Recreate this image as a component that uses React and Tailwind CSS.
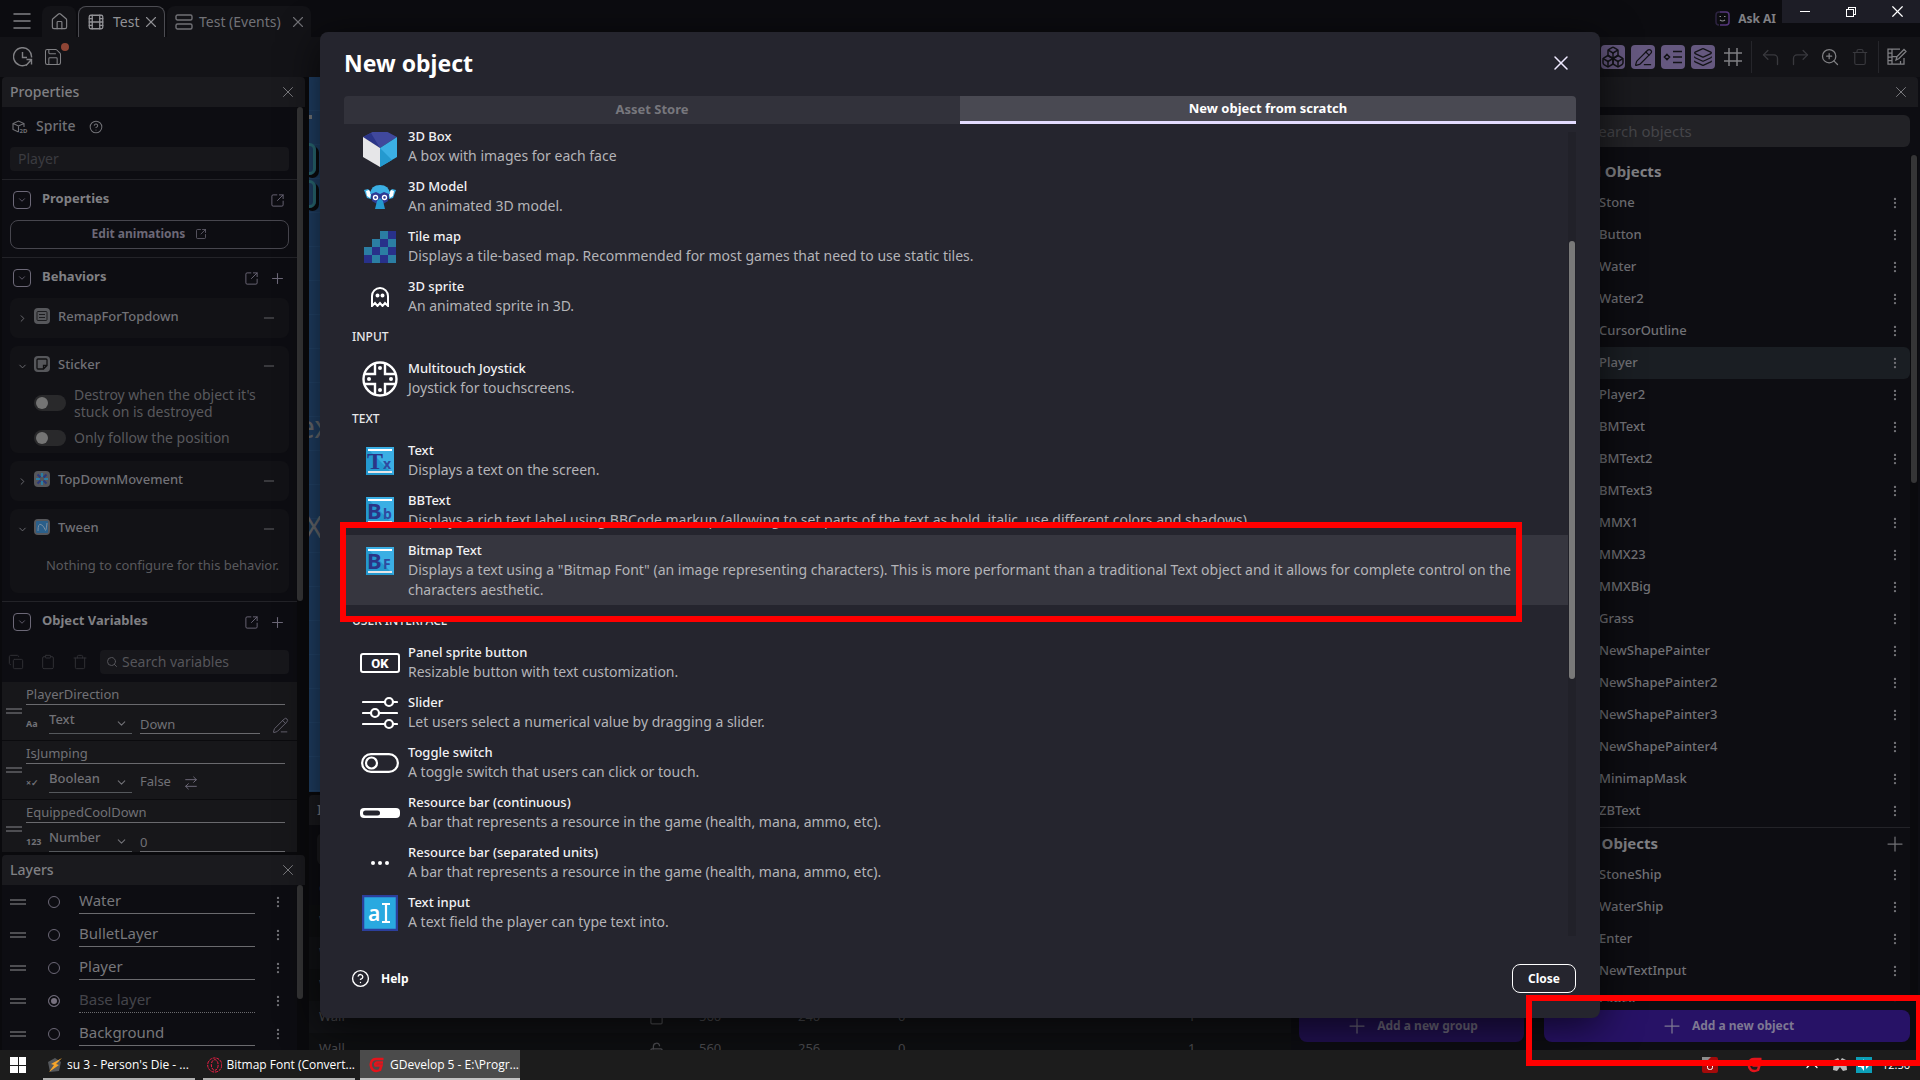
import {
  Menu, House, Film, X, Save, CircleHelp, ChevronDown, ChevronRight, SquareArrowOutUpRight, Plus, Minus,
  Copy, Clipboard, Trash, Search, PencilLine, ArrowRightLeft, EllipsisVertical, Boxes, Layers, CornerUpLeft,
  CornerUpRight, ZoomIn, Lock, LockOpen, ChevronUp,
} from 'lucide-react';

const localObjects = [
  'Stone', 'Button', 'Water', 'Water2', 'CursorOutline', 'Player', 'Player2', 'BMText', 'BMText2', 'BMText3', 'MMX1',
  'MMX23', 'MMXBig', 'Grass', 'NewShapePainter', 'NewShapePainter2', 'NewShapePainter3', 'NewShapePainter4',
  'MinimapMask', 'ZBText',
];
const globalObjects = ['StoneShip', 'WaterShip', 'Enter', 'NewTextInput', 'Lance'];
const layers = ['Water', 'BulletLayer', 'Player', 'Base layer', 'Background'];

/* ---------- Object type icons ---------- */

const BoxIcon = () => (
  <svg width="36" height="40" viewBox="0 0 36 40">
    <path d="M18 1 35 10 18 21 1 10Z" fill="#40489c" />
    <path d="M1 10 9 6 18 21Z" fill="#2b3587" />
    <path d="M1 10 18 21V40L1 30Z" fill="#e6e6e8" />
    <path d="M35 10 18 21V40L35 30Z" fill="#3bafe4" />
    <path d="M18 21 30 33 18 40Z" fill="#2499cf" />
  </svg>
);

const MonkeyIcon = () => (
  <svg width="32" height="26" viewBox="0 0 32 26">
    <path d="M0 6 4 5 8 9 7 15 3 14Z M32 6 28 5 24 9 25 15 29 14Z" fill="#3bafe4" />
    <path d="M2 7 5 6 7 10 6 14 3 12Z M30 7 27 6 25 10 26 14 29 12Z" fill="#fff" />
    <path d="M6 10Q7 1 16 1T26 10L20 12H12Z" fill="#3bafe4" />
    <path d="M7 10 12 8 16 10 20 8 25 10 24 17 19 20H13L8 17Z" fill="#2c3a94" />
    <path d="M13 17 16 14 19 17 21 25H11Z" fill="#2499cf" />
    <circle cx="11.5" cy="13.5" r="2" fill="#2c3a94" stroke="#fff" strokeWidth="1.4" />
    <circle cx="20.5" cy="13.5" r="2" fill="#2c3a94" stroke="#fff" strokeWidth="1.4" />
  </svg>
);

const TileMapIcon = () => (
  <svg width="32" height="32" viewBox="0 0 32 32" shapeRendering="crispEdges">
    <path d="M16 0h8v8h-8z M8 8h8v8H8z M24 8h8v8h-8z M0 16h8v8H0z M16 16h8v8h-8z M8 24h8v8H8z M24 24h8v8h-8z" fill="#2b7ea3" />
    <path d="M24 0h8v8h-8z M16 8h8v8h-8z M8 16h8v8H8z M24 16h8v8h-8z M0 24h8v8H0z M16 24h8v8h-8z" fill="#28318a" />
  </svg>
);

const GhostIcon = () => (
  <svg width="18" height="20" viewBox="0 0 18 20" fill="none" stroke="#fff" strokeWidth="2">
    <path d="M1 19V9a8 8 0 0 1 16 0v10l-3-3-2.500 3L9 16l-2.500 3L4 16Z" />
    <circle cx="6.500" cy="8.500" r="1" />
    <circle cx="11.500" cy="8.500" r="1" />
  </svg>
);

const JoystickIcon = () => (
  <svg width="36" height="36" viewBox="0 0 36 36" fill="none" stroke="#fff" strokeWidth="2.400">
    <circle cx="18" cy="18" r="16.500" />
    <path d="M13 3V13H3 M23 3V13H33 M13 33V23H3 M23 33V23H33" />
    <g fill="#fff" stroke="none">
      <circle cx="18" cy="7" r="2" /><circle cx="18" cy="29" r="2" />
      <circle cx="7" cy="18" r="2" /><circle cx="29" cy="18" r="2" />
    </g>
  </svg>
);

const LetterIcon = ({ big, small, serif }) => (
  <svg width="28" height="28" viewBox="0 0 28 28">
    <rect width="28" height="28" fill="#3bafe4" />
    <path d="M0 0 28 28H0Z" fill="#2499cf" />
    <path d="M2 3H26" stroke="#fff" strokeWidth="2" />
    <path d="M2 25H26" stroke="#e6e6e8" strokeWidth="2" />
    <text x="1" y="22" fontSize={serif ? 24 : 22} fontWeight="700" fill="#2b3587" fontFamily={serif ? 'Liberation Serif' : 'Noto Sans'}>{big}</text>
    <text x="17" y="22" fontSize="14" fontWeight="700" fill="#2f4ba0" fontFamily="Noto Sans">{small}</text>
  </svg>
);

const OkIcon = () => (
  <svg width="40" height="20" viewBox="0 0 40 20">
    <rect x="1" y="1" width="38" height="18" rx="2" fill="none" stroke="#fff" strokeWidth="2" />
    <text x="20" y="15" textAnchor="middle" fontSize="13" fontWeight="800" fill="#fff" fontFamily="Roboto">OK</text>
  </svg>
);

const SliderIcon = () => (
  <svg width="36" height="34" viewBox="0 0 36 34" stroke="#fff" strokeWidth="2.200" strokeLinecap="round">
    <path d="M1 6H35 M1 17H35 M1 28H35" />
    <g fill="#25252e">
      <circle cx="27" cy="6" r="4" /><circle cx="13" cy="17" r="4" /><circle cx="27" cy="28" r="4" />
    </g>
  </svg>
);

const ToggleIcon = () => (
  <svg width="38" height="20" viewBox="0 0 38 20" fill="none" stroke="#fff" strokeWidth="2.200">
    <rect x="1.100" y="1.100" width="35.800" height="17.800" rx="8.900" />
    <circle cx="10.500" cy="10" r="5.500" />
  </svg>
);

const BarIcon = () => (
  <svg width="40" height="10" viewBox="0 0 40 10">
    <rect width="40" height="10" rx="4" fill="#fff" />
    <rect x="3" y="2.500" width="17" height="5" rx="2.500" fill="#25252e" />
  </svg>
);

const DotsIcon = () => (
  <svg width="18" height="4" viewBox="0 0 18 4" fill="#fff">
    <circle cx="2" cy="2" r="2" /><circle cx="9" cy="2" r="2" /><circle cx="16" cy="2" r="2" />
  </svg>
);

const TextInputIcon = () => (
  <svg width="36" height="36" viewBox="0 0 36 36">
    <rect x="1" y="1" width="34" height="34" fill="#29a9e0" stroke="#2c3f9c" strokeWidth="2.500" />
    <text x="6" y="26" fontSize="21" fontWeight="600" fill="#fff" fontFamily="Noto Sans">a</text>
    <path d="M20 9H28 M24 9V27 M20 27H28" stroke="#fff" strokeWidth="2.200" />
  </svg>
);

/* ---------- Toolbar and behavior icons ---------- */

const HistoryIcon = () => (
  <svg width="20" height="20" viewBox="0 0 20 20" fill="none" stroke="currentColor" strokeWidth="1.400">
    <path d="M18.500 10.500A9 9 0 1 0 14 17.500" />
    <path d="M9.500 5v5.500H14 M13.500 12.500h5v5 M18.500 12.500 13 18.500" />
  </svg>
);

const EventsIcon = () => (
  <svg width="18" height="16" viewBox="0 0 18 16" fill="none" stroke="currentColor" strokeWidth="1.400">
    <rect x="1" y="1" width="16" height="5" rx="1.500" />
    <rect x="1" y="10" width="16" height="5" rx="1.500" />
  </svg>
);

const InstancesIcon = () => (
  <svg width="20" height="16" viewBox="0 0 20 16" fill="none" stroke="currentColor" strokeWidth="1.600">
    <path d="M4 5.500 6.500 8 4 10.500 1.500 8Z M10 2.500h9 M10 8h9 M10 13.500h9" />
  </svg>
);

const GridIcon = () => (
  <svg width="18" height="18" viewBox="0 0 18 18" fill="none" stroke="currentColor" strokeWidth="1.500">
    <path d="M5 0v18 M13 0v18 M0 5h18 M0 13h18" />
  </svg>
);

const AskIcon = () => (
  <svg width="15" height="15" viewBox="0 0 15 15" fill="none">
    <path d="M5 1H4Q1 1 1 4v7q0 3 3 3" stroke="#2c2340" strokeWidth="1.500" />
    <path d="M5 14h6q3 0 3-3V4q0-3-3-3H5" stroke="#55377c" strokeWidth="1.500" />
    <path d="M4.500 5.500H6 M9 5.500h1.500 M5 9q2.500 2 5 0" stroke="#8a8a8e" strokeWidth="1.200" />
  </svg>
);

const SpriteIcon = () => (
  <svg width="16" height="14" viewBox="0 0 16 14" fill="none" stroke="currentColor" strokeWidth="1.100">
    <path d="M6.500 12 1 9.500v-6L6.500 1 12 3.500V7 M1 3.500 6.500 6 12 3.500 M6.500 6v6" />
    <text x="7.500" y="13" fontSize="6" fontWeight="700" fill="currentColor" stroke="none">2D</text>
  </svg>
);

const behaviorIcons = {
  remap: <path d="M4 3.500h8q1 0 1 1v7q0 1-1 1H4q-1 0-1-1v-7q0-1 1-1Z M5 6.500h6 M5 9.500h6" stroke="#1c1c1f" />,
  sticker: <path d="M4 3h8q1 0 1 1v5.500L9.500 13H4q-1 0-1-1V4q0-1 1-1Z M13 9.500H9.500V13" stroke="#101012" strokeWidth="1.300" />,
  topdown: (
    <>
      <path d="M8 2v4 M8 10v4 M2 8h4 M10 8h4" stroke="#2b7ea3" strokeWidth="2.200" />
      <path d="M3.500 3.500l3 3 M9.500 9.500l3 3 M12.500 3.500l-3 3 M6.500 9.500l-3 3" stroke="#2c3a7c" strokeWidth="2" />
    </>
  ),
  tween: (
    <>
      <rect x="2" y="2" width="12" height="12" rx="1" fill="#2b5f8a" />
      <path d="M4 12Q4 4 7 5.500T11 10.500 13 4" stroke="#7d8fa0" />
    </>
  ),
};

const sections = [
  {
    items: [
      { icon: <BoxIcon />, title: '3D Box', text: 'A box with images for each face' },
      { icon: <MonkeyIcon />, title: '3D Model', text: 'An animated 3D model.' },
      { icon: <TileMapIcon />, title: 'Tile map', text: 'Displays a tile-based map. Recommended for most games that need to use static tiles.' },
      { icon: <GhostIcon />, title: '3D sprite', text: 'An animated sprite in 3D.' },
    ],
  },
  {
    name: 'INPUT',
    items: [{ icon: <JoystickIcon />, title: 'Multitouch Joystick', text: 'Joystick for touchscreens.' }],
  },
  {
    name: 'TEXT',
    items: [
      { icon: <LetterIcon big="T" small="x" serif />, title: 'Text', text: 'Displays a text on the screen.' },
      { icon: <LetterIcon big="B" small="b" />, title: 'BBText', text: 'Displays a rich text label using BBCode markup (allowing to set parts of the text as bold, italic, use different colors and shadows).' },
      { icon: <LetterIcon big="B" small="F" />, title: 'Bitmap Text', active: true, text: 'Displays a text using a "Bitmap Font" (an image representing characters). This is more performant than a traditional Text object and it allows for complete control on the characters aesthetic.' },
    ],
  },
  {
    name: 'USER INTERFACE',
    items: [
      { icon: <OkIcon />, title: 'Panel sprite button', text: 'Resizable button with text customization.' },
      { icon: <SliderIcon />, title: 'Slider', text: 'Let users select a numerical value by dragging a slider.' },
      { icon: <ToggleIcon />, title: 'Toggle switch', text: 'A toggle switch that users can click or touch.' },
      { icon: <BarIcon />, title: 'Resource bar (continuous)', text: 'A bar that represents a resource in the game (health, mana, ammo, etc).' },
      { icon: <DotsIcon />, title: 'Resource bar (separated units)', text: 'A bar that represents a resource in the game (health, mana, ammo, etc).' },
      { icon: <TextInputIcon />, title: 'Text input', text: 'A text field the player can type text into.' },
    ],
  },
];

/* ---------- Top bars ---------- */

const TitleBar = () => (
  <header className="flex h-[37px] shrink-0 items-end bg-[#0c0c10] text-[#808084]">
    <button aria-label="Menu" className="flex h-8 w-[42px] items-center justify-center pl-0.5"><Menu size={24} strokeWidth={1.5} /></button>
    <button aria-label="Home" className="flex h-[31px] w-[34px] items-center justify-center rounded-t-lg bg-[#131317]"><House size={19} strokeWidth={1.5} /></button>
    <div className="ml-0.5 flex h-[31px] w-[87px] items-center rounded-t-lg border border-b-0 border-[#4c4c52] bg-[#131317] pl-2 text-[#919195]">
      <Film size={18} strokeWidth={1.75} />
      <span className="ml-2 flex-1 text-sm">Test</span>
      <button aria-label="Close Test" className="mr-1"><X size={18} strokeWidth={1.5} /></button>
    </div>
    <div className="ml-0.5 flex h-[31px] w-36 items-center rounded-t-lg bg-[#131317] pl-2 text-[#717176]">
      <EventsIcon />
      <span className="ml-1.5 flex-1 text-sm">Test (Events)</span>
      <button aria-label="Close Test (Events)" className="mr-1"><X size={18} strokeWidth={1.5} /></button>
    </div>
    <div className="flex-1" />
    <button className="flex h-[37px] items-center gap-2 pr-1.5 text-xs font-bold">
      <AskIcon />
      Ask AI
    </button>
    <div className="flex h-[23px] w-[138px] self-start bg-[#1d1d26] text-white">
      <button aria-label="Minimize" className="flex flex-1 items-center justify-center"><span className="h-px w-2.5 bg-white" /></button>
      <button aria-label="Restore" className="flex flex-1 items-center justify-center">
        <svg width="10" height="10" viewBox="0 0 10 10" fill="none" stroke="#fff" shapeRendering="crispEdges"><path d="M.5 2.500h7v7h-7z M2.500 2.500v-2h7v7h-2" /></svg>
      </button>
      <button aria-label="Close window" className="flex flex-1 items-center justify-center"><X size={19} strokeWidth={1.5} /></button>
    </div>
  </header>
);

const ToolButton = ({ label, on, dim, children }) => (
  <button
    aria-label={label}
    className={on
      ? 'flex size-6 items-center justify-center rounded bg-[#65587f] text-[#131317]'
      : dim
        ? 'flex size-6 items-center justify-center text-[#39393e]'
        : 'flex size-6 items-center justify-center text-[#808084]'}
  >
    {children}
  </button>
);

const Toolbar = () => (
  <div className="flex h-10 shrink-0 items-center bg-[#131317] px-[11px]">
    <ToolButton label="History"><HistoryIcon /></ToolButton>
    <div className="relative ml-1.5">
      <ToolButton label="Save"><Save size={20} strokeWidth={1.25} /></ToolButton>
      <span className="absolute -top-0.5 -right-1 size-2 rounded-full bg-[#8f4535]" />
    </div>
    <div className="flex-1" />
    <div className="flex items-center gap-1.5">
      <ToolButton on label="Objects"><Boxes size={24} strokeWidth={1.5} /></ToolButton>
      <ToolButton on label="Properties"><PencilLine size={19} strokeWidth={1.5} /></ToolButton>
      <ToolButton on label="Instances"><InstancesIcon /></ToolButton>
      <ToolButton on label="Layers"><Layers size={20} strokeWidth={1.5} /></ToolButton>
      <ToolButton label="Grid"><GridIcon /></ToolButton>
      <span className="h-8 w-px bg-[#26262b]" />
      <ToolButton dim label="Undo"><CornerUpLeft size={21} strokeWidth={1.5} /></ToolButton>
      <ToolButton dim label="Redo"><CornerUpRight size={21} strokeWidth={1.5} /></ToolButton>
      <ToolButton label="Zoom"><ZoomIn size={20} strokeWidth={1.5} /></ToolButton>
      <ToolButton dim label="Delete"><Trash size={18} strokeWidth={1.5} /></ToolButton>
      <span className="h-8 w-px bg-[#26262b]" />
      <ToolButton label="Edit scene">
        <svg width="20" height="18" viewBox="0 0 20 18" fill="none" stroke="currentColor" strokeWidth="1.250">
          <path d="M17 10v6H1V1h12 M5 1v15 M1 5h4 M1 9h4 M1 12.500h4 M5 8.500h5 M13.500 13v3 M9 12l1-3.500 7-7 2 2-7 7Z" />
        </svg>
      </ToolButton>
    </div>
  </div>
);

/* ---------- Left column ---------- */

const PanelHeader = ({ title }) => (
  <div className="flex h-[30px] shrink-0 items-center rounded-t bg-[#1a1a1e] px-2">
    <h2 className="flex-1 text-sm font-medium text-[#808084]">{title}</h2>
    <button aria-label="Close panel" className="text-[#808084]"><X size={18} strokeWidth={1.25} /></button>
  </div>
);

const SectionHeader = ({ title, add }) => (
  <div className="flex h-10 items-center pr-2.5 pl-[11px] text-[#6c6877]">
    <button aria-label={`Fold ${title}`} className="flex size-[18px] items-center justify-center rounded border border-[#6c6877]"><ChevronDown size={10} /></button>
    <h3 className="ml-[11px] flex-1 pb-0.5 text-[13px] font-bold text-[#808084]">{title}</h3>
    <button aria-label={`Open ${title}`} className={add ? 'mr-2.5' : 'mr-0.5'}><SquareArrowOutUpRight size={15} strokeWidth={1.5} /></button>
    {add && <button aria-label={`Add to ${title}`} className="mr-px"><Plus size={17} strokeWidth={1.5} /></button>}
  </div>
);

const Behavior = ({ name, open, icon, children }) => (
  <div className="mx-2 mb-2 rounded-lg bg-[#121216]">
    <div className="flex h-10 items-center pr-3 pl-[7px]">
      <button aria-label={`Fold ${name}`} className="text-[#717176]">{open ? <ChevronDown size={11} /> : <ChevronRight size={11} />}</button>
      <svg width="16" height="16" viewBox="0 0 16 16" fill="none" className="mb-1 ml-1.5 rounded bg-[#56575b]">{behaviorIcons[icon]}</svg>
      <span className="ml-2 flex-1 pb-0.5 text-[13px] font-medium text-[#717176]">{name}</span>
      <button aria-label={`Remove ${name}`} className="text-[#717176]"><Minus size={16} strokeWidth={1.25} /></button>
    </div>
    {children}
  </div>
);

const Switch = ({ label }) => (
  <label className="flex items-center gap-2 text-sm leading-[17px] text-[#59595d]">
    <input
      type="checkbox"
      role="switch"
      className="h-4 w-8 shrink-0 appearance-none rounded-full bg-[#29292b] before:block before:size-3 before:translate-x-0.5 before:translate-y-0.5 before:rounded-full before:bg-[#747474]"
    />
    {label}
  </label>
);

const Handle = () => <span className="h-1.5 w-4 shrink-0 self-center border-y-2 border-[#4e4e52]" />;

const Variable = ({ name, type, badge, children }) => (
  <div className="flex h-[59px] shrink-0 items-start border-b border-[#0b0b0e] bg-[#17171a] pl-1">
    <Handle />
    <div className="ml-1 min-w-0 flex-1 pr-3">
      <input aria-label="Variable name" defaultValue={name} className="block h-[23px] w-full border-b border-[#6a6a6e] pt-0.5 text-[13px] text-[#717176] outline-none" />
      <div className="flex h-[29px] items-end">
        <span className="w-[23px] pb-1 text-[9px] font-bold text-[#717176]">{badge}</span>
        <div className="relative w-[83px] shrink-0">
          <select aria-label={`${name} type`} className="block h-[26px] w-full appearance-none border-b border-[#55585c] pb-0.5 text-[13px] font-medium text-[#717176] outline-none"><option>{type}</option></select>
          <ChevronDown size={13} className="pointer-events-none absolute right-1 bottom-1 text-[#717176]" />
        </div>
        {children}
      </div>
    </div>
  </div>
);

const ValueInput = ({ label, value }) => (
  <input aria-label={label} defaultValue={value} className="ml-2 h-5 min-w-0 flex-1 border-b border-[#6a6a6e] text-[13px] text-[#717176] outline-none" />
);

const PropertiesPanel = () => (
  <section className="flex h-[775px] shrink-0 flex-col overflow-hidden">
    <PanelHeader title="Properties" />
    <div className="flex min-h-0 flex-1 bg-[#0d0d12]">
      <div className="flex min-w-0 flex-1 flex-col overflow-hidden">
        <div className="flex h-10 shrink-0 items-center pl-2.5 text-[#717176]">
          <SpriteIcon />
          <span className="ml-2 pb-0.5 text-sm font-medium">Sprite</span>
          <CircleHelp size={14} strokeWidth={1.75} className="ml-3.5" />
        </div>
        <input aria-label="Object name" disabled defaultValue="Player" className="mx-2 h-6 shrink-0 rounded bg-[#17171b] px-2 pb-0.5 text-sm text-[#3b3b40]" />
        <div className="mt-2 shrink-0 border-t border-[#232328] pb-2">
          <SectionHeader title="Properties" />
          <div className="px-2">
            <button className="flex h-[29px] w-full items-center justify-center gap-2.5 rounded-lg border border-[#47464e] pb-0.5 text-xs font-bold text-[#6c6877]">
              Edit animations <SquareArrowOutUpRight size={12} strokeWidth={1.5} />
            </button>
          </div>
        </div>
        <div className="shrink-0 border-t border-[#232328]">
          <SectionHeader title="Behaviors" add />
          <Behavior name="RemapForTopdown" icon="remap" />
          <Behavior name="Sticker" open icon="sticker">
            <div className="flex h-[67px] flex-col gap-[9px] pl-6">
              <Switch label={<span>Destroy when the object it's<br />stuck on is destroyed</span>} />
              <Switch label="Only follow the position" />
            </div>
          </Behavior>
          <Behavior name="TopDownMovement" icon="topdown" />
          <Behavior name="Tween" open icon="tween">
            <p className="h-11 pt-[7px] pr-2.5 text-right text-[13px] whitespace-nowrap text-[#59595d]">Nothing to configure for this behavior.</p>
          </Behavior>
        </div>
        <div className="shrink-0 border-t border-[#232328]">
          <SectionHeader title="Object Variables" add />
          <div className="flex h-10 items-center gap-4 pr-2 pl-1.5 text-[#2f2f34]">
            <Copy size={16} strokeWidth={1.5} className="shrink-0" />
            <Clipboard size={16} strokeWidth={1.5} className="shrink-0" />
            <Trash size={16} strokeWidth={1.5} className="shrink-0" />
            <div className="-ml-1 flex h-6 min-w-0 flex-1 items-center gap-1 rounded bg-[#17171b] pl-1.5 text-[#55555a]">
              <Search size={12} />
              <input aria-label="Search variables" placeholder="Search variables" className="min-w-0 flex-1 text-sm outline-none placeholder:text-[#55555a]" />
            </div>
          </div>
          <Variable name="PlayerDirection" type="Text" badge="Aa">
            <ValueInput label="PlayerDirection value" value="Down" />
            <button aria-label="Edit value" className="ml-3 -mr-1 text-[#6c6877]"><PencilLine size={17} strokeWidth={1.25} /></button>
          </Variable>
          <Variable name="IsJumping" type="Boolean" badge="×✓">
            <span className="ml-2 pb-0.5 text-[13px] text-[#717176]">False</span>
            <button aria-label="Switch value" className="ml-3 pb-0.5 text-[#6c6877]"><ArrowRightLeft size={16} strokeWidth={1.5} /></button>
          </Variable>
          <Variable name="EquippedCoolDown" type="Number" badge="123">
            <ValueInput label="EquippedCoolDown value" value="0" />
          </Variable>
        </div>
      </div>
      <div className="w-2 shrink-0 bg-[#0a0a0d] pr-0.5"><div className="h-[494px] rounded-full bg-[#353536]" /></div>
    </div>
  </section>
);

const LayersPanel = () => (
  <section className="mt-[3px] flex min-h-0 flex-1 flex-col overflow-hidden">
    <PanelHeader title="Layers" />
    <div className="flex min-h-0 flex-1 bg-[#0d0d12]">
      <div className="min-w-0 flex-1">
        {layers.map((layer) => (
          <div key={layer} className="flex h-[33px] items-center pr-3 pl-2">
            <Handle />
            <input
              type="radio"
              name="layer"
              aria-label={`Select ${layer}`}
              defaultChecked={layer === 'Base layer'}
              className="ml-[22px] size-3 shrink-0 appearance-none rounded-full border border-[#6c6877] checked:bg-[#77717f] checked:shadow-[inset_0_0_0_2px_#0d0d12]"
            />
            <input
              aria-label={`${layer} name`}
              defaultValue={layer}
              className={layer === 'Base layer'
                ? 'ml-[19px] h-6 min-w-0 flex-1 border-b border-dotted border-[#6a6a6e] pb-0.5 text-[15px] text-[#44444a] outline-none'
                : 'ml-[19px] h-6 min-w-0 flex-1 border-b border-[#6a6a6e] pb-0.5 text-[15px] text-[#77777b] outline-none'}
            />
            <button aria-label={`${layer} menu`} className="ml-4 text-[#717176]"><EllipsisVertical size={14} /></button>
          </div>
        ))}
      </div>
      <div className="w-2 shrink-0 bg-[#0a0a0d] pr-0.5"><div className="h-[114px] rounded-full bg-[#353536]" /></div>
    </div>
  </section>
);

/* ---------- Middle and right columns ---------- */

const SceneColumn = () => (
  <div className="flex min-w-0 flex-1 flex-col pl-0.5">
    <div className="relative h-[715px] shrink-0 overflow-hidden bg-[#204066] bg-[repeating-linear-gradient(#204066_0_33px,#24466d_33px_34px)]">
      <span className="absolute top-[38px] left-0 h-1 w-[3px] bg-[#77797c]" />
      <span className="absolute top-[66px] left-[-6px] h-8 w-[13px] rounded-lg border-3 border-[#2b6e78] shadow-[3px_3px_0_#0b0b0e]" />
      <span className="absolute top-[103px] left-[-6px] h-7 w-[13px] rounded-lg border-3 border-[#2b6e78] shadow-[3px_3px_0_#0b0b0e]" />
      <span className="absolute top-[332px] left-[-11px] text-3xl text-[#6b6e72]">ex</span>
      <span className="absolute top-[432px] left-[-4px] text-3xl text-[#6b6e72]">X</span>
    </div>
    <div className="mt-[3px] flex min-h-0 flex-1 flex-col overflow-hidden bg-[#0d0d12]">
      <PanelHeader title="Instances List" />
      <input aria-label="Search instances" placeholder="Search instances" className="mx-2 mt-2 h-8 shrink-0 rounded-md bg-[#1b1b1f] px-8 text-[13px]" />
      <table className="mt-2 w-full table-fixed text-left text-[13px] text-[#4b4b4f]">
        <thead>
          <tr className="h-8">
            <th className="w-[330px] pl-2.5 font-medium">Object name</th>
            <th className="w-[60px]" />
            <th className="w-[99px] font-medium">X</th>
            <th className="w-[100px] font-medium">Y</th>
            <th className="w-[290px] font-medium">Angle</th>
            <th className="font-medium">Z Order</th>
          </tr>
        </thead>
        <tbody>
          {[['208', 1], ['224', 1], ['232', 1], ['240', 1], ['256', 0]].map(([y, locked]) => (
            <tr key={y} className="h-8 odd:bg-[#0e0f11] even:bg-[#111215]">
              <td className="pl-2.5">Wall</td>
              <td className="pl-2.5">{locked ? <Lock size={15} /> : <LockOpen size={15} />}</td>
              <td>560</td>
              <td>{y}</td>
              <td>0</td>
              <td>1</td>
            </tr>
          ))}
        </tbody>
      </table>
    </div>
  </div>
);

const GroupsColumn = () => (
  <section className="flex w-[245px] shrink-0 flex-col bg-[#0d0d12]">
    <PanelHeader title="Object Groups" />
    <div className="flex-1" />
    <button className="mr-3 mb-2 ml-2 flex h-8 items-center justify-center gap-2 rounded-lg bg-[#20104f] text-xs font-bold text-[#6b6679]">
      <Plus size={24} strokeWidth={1.25} /> Add a new group
    </button>
  </section>
);

const ObjectRow = ({ name }) => (
  <li className={name === 'Player' ? 'flex h-8 shrink-0 items-center rounded-md bg-[#1a1e23]' : 'flex h-8 shrink-0 items-center'}>
    <span className="ml-6 size-6 rounded bg-[#1a1a1e]" />
    <span className="ml-[7px] flex-1 text-[13px] font-medium text-[#717176]">{name}</span>
    <button aria-label={`${name} menu`} className="mr-2 text-[#717176]"><EllipsisVertical size={14} /></button>
  </li>
);

const ObjectsColumn = () => (
  <section className="flex w-[384px] shrink-0 flex-col bg-[#0d0d12] pr-0.5">
    <PanelHeader title="Objects" />
    <div className="mx-2 mt-2 flex h-8 shrink-0 items-center rounded-md bg-[#222226] pl-2 text-[#454549]">
      <Search size={16} />
      <input aria-label="Search objects" placeholder="Search objects" className="ml-[22px] flex-1 text-[15px] outline-none placeholder:text-[#454549]" />
    </div>
    <div className="mt-2 flex min-h-0 flex-1">
      <div className="ml-2 flex min-w-0 flex-1 flex-col overflow-hidden">
        <h3 className="flex h-8 shrink-0 items-center pl-[18px] text-[15px] font-bold text-[#808084]">Local Objects</h3>
        <ul>{localObjects.map((name) => <ObjectRow key={name} name={name} />)}</ul>
        <div className="flex h-8 shrink-0 items-center border-t border-[#232328] pl-1.5">
          <h3 className="flex-1 text-[15px] font-bold text-[#808084]">Global Objects</h3>
          <button aria-label="Add a global object" className="mr-[3px] text-[#717176]"><Plus size={24} strokeWidth={1.25} /></button>
        </div>
        <ul>{globalObjects.map((name) => <ObjectRow key={name} name={name} />)}</ul>
      </div>
      <div className="w-2 shrink-0 bg-[#0a0a0d] pr-px pl-px"><div className="h-[328px] rounded-full bg-[#353536]" /></div>
    </div>
    <button className="mx-2 my-2 flex h-8 shrink-0 items-center justify-center gap-2 rounded-lg bg-[#271266] text-xs font-bold text-[#7e7893]">
      <Plus size={24} strokeWidth={1.25} /> Add a new object
    </button>
  </section>
);

/* ---------- Dialog ---------- */

const NewObjectDialog = () => (
  <div className="absolute inset-0 flex justify-center py-8">
    <div role="dialog" aria-labelledby="dialog-title" className="flex w-full max-w-[1280px] flex-col rounded-lg bg-[#25252e] px-6 pb-6 shadow-[0_8px_40px_#000000aa]">
      <div className="mb-0.5 flex h-[62px] shrink-0 items-center justify-between pr-[3px]">
        <h1 id="dialog-title" className="text-[23px] font-bold text-white">New object</h1>
        <button aria-label="Close dialog" className="text-[#efeaff]"><X size={24} strokeWidth={1.5} /></button>
      </div>
      <div className="grid h-7 shrink-0 grid-cols-2 text-[13px] font-bold">
        <button className="rounded-tl bg-[#32323b] text-[#77777d]">Asset Store</button>
        <button className="rounded-tr border-b-3 border-[#e3dcff] bg-[#494952] text-white">New object from scratch</button>
      </div>
      <div className="mt-2 flex min-h-0 flex-1">
        <div className="min-w-0 flex-1 overflow-hidden">
          <div className="-mt-[11px]">
            {sections.map((section, i) => (
              <div key={i}>
                {section.name && <h2 className="flex h-8 items-center pl-2 text-xs font-medium text-[#e8e8ea]">{section.name}</h2>}
                {section.items.map((item) => (
                  <button
                    key={item.title}
                    className={item.active
                      ? 'flex w-full gap-2 bg-[#36363f] py-[5px] pr-14 pl-4 text-left'
                      : 'flex w-full gap-2 py-[5px] pr-14 pl-4 text-left'}
                  >
                    <span className="-mb-0.5 flex h-[42px] w-10 shrink-0 items-center justify-center">{item.icon}</span>
                    <span className="leading-5">
                      <span className="block text-[13px] font-medium text-[#f2f2f4]">{item.title}</span>
                      <span className="block text-[14px] text-[#b4b4b8]">{item.text}</span>
                    </span>
                  </button>
                ))}
              </div>
            ))}
          </div>
        </div>
        <div className="w-2 shrink-0 bg-[#212129] px-px pt-[109px]"><div className="h-[438px] rounded-full bg-[#797979]" /></div>
      </div>
      <div className="mt-7 mb-px flex h-[29px] shrink-0 items-center justify-between">
        <button className="flex items-center gap-[11px] pl-[7px] text-xs font-bold text-white"><CircleHelp size={19} strokeWidth={1.75} /> Help</button>
        <button className="h-full w-16 rounded-lg border border-white text-xs font-bold text-white">Close</button>
      </div>
    </div>
  </div>
);

/* ---------- Taskbar ---------- */

const Task = ({ icon, label, active }) => (
  <button
    className={active
      ? 'ml-[5px] flex h-full w-40 items-center gap-1.5 border-b-2 border-[#c4c4c4] bg-[#4b4b4b] pt-0.5 pl-2'
      : 'ml-2 flex h-full w-[152px] items-center gap-1 border-b-2 border-[#b0b0b0] pt-0.5 pl-1'}
  >
    {icon}
    <span className="flex-1 text-left whitespace-nowrap">{label}</span>
  </button>
);

const GdLogo = () => (
  <svg width="16" height="16" viewBox="0 0 16 16" fill="none" stroke="#e3141c" strokeWidth="2.500">
    <path d="M15.500 2H8Q4 2 3 6T5 13q3 2 7 0l1.500-4.500H7.500Q6.500 6 9 5.500h6" />
  </svg>
);

const Taskbar = () => (
  <footer className="flex h-[30px] shrink-0 items-center bg-[#1c1c1c] font-['Open_Sans',sans-serif] text-xs text-white">
    <button aria-label="Start" className="ml-2.5 grid size-4 shrink-0 grid-cols-2 gap-px">
      <span className="bg-white" /><span className="bg-white" /><span className="bg-white" /><span className="bg-white" />
    </button>
    <span className="w-[9px]" />
    <Task
      label="su 3 - Person's Die - ..."
      icon={<svg width="16" height="16" viewBox="0 0 16 16"><path d="M1 5 8 1 14 5 12 14 3 15Z" fill="#55585c" /><path d="M15 1 4 7l3 1-5 7L12 8 9 7Z" fill="#f6a52b" /></svg>}
    />
    <Task
      label="Bitmap Font (Convert..."
      icon={<svg width="16" height="16" viewBox="0 0 16 16" fill="none" stroke="#ff1f4b"><circle cx="8" cy="8" r="7.300" strokeDasharray="3 1" /><ellipse cx="8" cy="8" rx="3.500" ry="5.500" strokeDasharray="3 1" /></svg>}
    />
    <Task active label="GDevelop 5 - E:\Progr..." icon={<GdLogo />} />
    <div className="flex-1" />
    <svg width="16" height="16" viewBox="0 0 16 16"><rect width="16" height="16" rx="2" fill="#a30a0a" /><path d="M0 0h9L0 9Z" fill="#8d8d8d" /><rect x="5.500" y="3.500" width="5" height="9" rx="2" fill="none" stroke="#fff" /></svg>
    <span className="mr-10 ml-7"><GdLogo /></span>
    <ChevronUp size={20} strokeWidth={1.5} />
    <svg width="16" height="16" viewBox="0 0 16 16" className="ml-2.5"><path d="M2 3 6 1 8 4 10 1 14 3 15 13 11 14 8 10 5 14 1 13Z" fill="#b9b9b9" /></svg>
    <svg width="16" height="16" viewBox="0 0 16 16" className="ml-2"><rect width="16" height="16" fill="#0c9fb8" /><path d="M2 6h3l3-4v12l-3-4H2z M10 4l4 4-4 4z" fill="#fff" /></svg>
    <time className="mr-2.5 ml-2.5 text-[11px]">12:56</time>
  </footer>
);

export default function App() {
  return (
    <div className="relative flex h-screen w-full flex-col overflow-hidden bg-[#0a0a0d] font-['Noto_Sans',sans-serif]">
      <div className="relative flex min-h-0 flex-1 flex-col overflow-hidden">
        <TitleBar />
        <Toolbar />
        <main className="flex min-h-0 flex-1 pl-0.5">
          <div className="flex w-[305px] shrink-0 flex-col pr-0.5">
            <PropertiesPanel />
            <LayersPanel />
          </div>
          <SceneColumn />
          <GroupsColumn />
          <ObjectsColumn />
        </main>
        <NewObjectDialog />
      </div>
      <Taskbar />

      {/* Highlight frames over the dialog row and the add button */}
      <div className="pointer-events-none absolute top-[522px] left-[340px] h-[100px] w-[1182px] border-6 border-[#ff0000]" />
      <div className="pointer-events-none absolute top-[995px] -right-0.5 h-[71px] w-[396px] border-6 border-[#ff0000]" />
    </div>
  );
}
